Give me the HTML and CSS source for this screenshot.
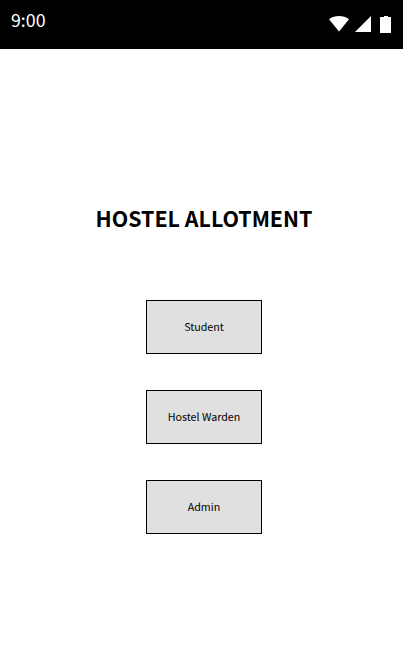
FILE: index.html
```html
<!DOCTYPE html>
<html lang="en">
<head>
<meta charset="utf-8">
<title>Hostel Allotment</title>
<link rel="stylesheet" href="styles.css">
</head>
<body>
<header class="status-bar">
  <span class="clock">9:00</span>
  <svg class="status-icons" width="64" height="20" viewBox="0 0 64 20" fill="#fff" aria-hidden="true">
    <path d="M1 5.200C6.500.9 15.500.9 21 5.200L11 17.500Z"/>
    <path d="M27 18L43 2V18Z"/>
    <path d="M52 3H56V2H60V3H63V19H52Z"/>
  </svg>
</header>
<main class="content">
  <h1 class="title">HOSTEL ALLOTMENT</h1>
  <nav class="roles">
    <button class="role">Student</button>
    <button class="role">Hostel Warden</button>
    <button class="role">Admin</button>
  </nav>
</main>
</body>
</html>
```
FILE: styles.css
```css
* { box-sizing: border-box; }
body {
  margin: 0;
  min-height: 645px;
  background: #fff;
  color: #000;
  font-family: "Noto Sans CJK SC", "Noto Sans", sans-serif;
}
.status-bar {
  display: flex;
  justify-content: space-between;
  height: 49px;
  padding: 0 11px;
  background: #000;
  color: #fff;
}
.clock { margin-top: 6px; font-size: 17.8px; line-height: 27px; }
.status-icons { margin-top: 14px; }
.content {
  display: flex;
  flex-direction: column;
  align-items: center;
  padding: 152px 0 0 5px;
}
.title { margin: 0; font-size: 21.4px; line-height: 34px; font-weight: 700; white-space: nowrap; }
.roles { display: flex; flex-direction: column; gap: 36px; margin-top: 65px; }
.role {
  width: 116px;
  height: 54px;
  padding: 0;
  border: 1px solid #000;
  background: #e0e0e0;
  color: #000;
  font: 10.7px/16px "Noto Sans CJK SC", "Noto Sans", sans-serif;
}
```
